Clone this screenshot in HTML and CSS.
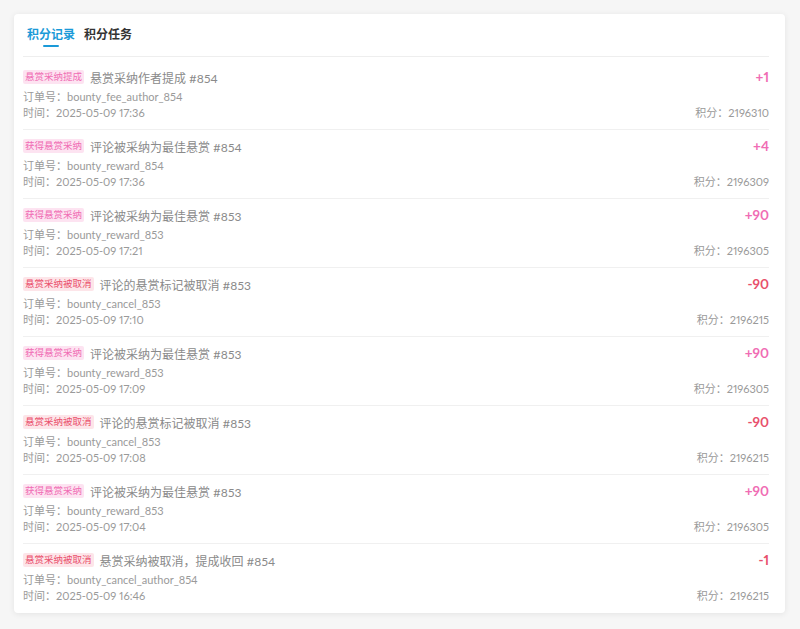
FILE: index.html
```html
<!DOCTYPE html>
<html lang="zh-CN">
<head>
<meta charset="utf-8">
<title>积分记录</title>
<link rel="stylesheet" href="styles.css">
</head>
<body>
<div class="page">
  <div class="card">
    <div class="tabs">
      <div class="tab active"><span class="tab-text">积分记录</span><span class="tab-bar"></span></div>
      <div class="tab"><span class="tab-text">积分任务</span><span class="tab-bar"></span></div>
    </div>
    <div class="list">
      <div class="row">
        <div class="line1"><div class="title"><span class="tag pink">悬赏采纳提成</span><span>悬赏采纳作者提成 #854</span></div><span class="val pink-text">+1</span></div>
        <div class="line2">订单号：bounty_fee_author_854</div>
        <div class="line3"><span>时间：2025-05-09 17:36</span><span>积分：2196310</span></div>
      </div>
      <div class="row">
        <div class="line1"><div class="title"><span class="tag pink">获得悬赏采纳</span><span>评论被采纳为最佳悬赏 #854</span></div><span class="val pink-text">+4</span></div>
        <div class="line2">订单号：bounty_reward_854</div>
        <div class="line3"><span>时间：2025-05-09 17:36</span><span>积分：2196309</span></div>
      </div>
      <div class="row">
        <div class="line1"><div class="title"><span class="tag pink">获得悬赏采纳</span><span>评论被采纳为最佳悬赏 #853</span></div><span class="val pink-text">+90</span></div>
        <div class="line2">订单号：bounty_reward_853</div>
        <div class="line3"><span>时间：2025-05-09 17:21</span><span>积分：2196305</span></div>
      </div>
      <div class="row">
        <div class="line1"><div class="title"><span class="tag red">悬赏采纳被取消</span><span>评论的悬赏标记被取消 #853</span></div><span class="val red-text">-90</span></div>
        <div class="line2">订单号：bounty_cancel_853</div>
        <div class="line3"><span>时间：2025-05-09 17:10</span><span>积分：2196215</span></div>
      </div>
      <div class="row">
        <div class="line1"><div class="title"><span class="tag pink">获得悬赏采纳</span><span>评论被采纳为最佳悬赏 #853</span></div><span class="val pink-text">+90</span></div>
        <div class="line2">订单号：bounty_reward_853</div>
        <div class="line3"><span>时间：2025-05-09 17:09</span><span>积分：2196305</span></div>
      </div>
      <div class="row">
        <div class="line1"><div class="title"><span class="tag red">悬赏采纳被取消</span><span>评论的悬赏标记被取消 #853</span></div><span class="val red-text">-90</span></div>
        <div class="line2">订单号：bounty_cancel_853</div>
        <div class="line3"><span>时间：2025-05-09 17:08</span><span>积分：2196215</span></div>
      </div>
      <div class="row">
        <div class="line1"><div class="title"><span class="tag pink">获得悬赏采纳</span><span>评论被采纳为最佳悬赏 #853</span></div><span class="val pink-text">+90</span></div>
        <div class="line2">订单号：bounty_reward_853</div>
        <div class="line3"><span>时间：2025-05-09 17:04</span><span>积分：2196305</span></div>
      </div>
      <div class="row last">
        <div class="line1"><div class="title"><span class="tag red">悬赏采纳被取消</span><span>悬赏采纳被取消，提成收回 #854</span></div><span class="val red-text">-1</span></div>
        <div class="line2">订单号：bounty_cancel_author_854</div>
        <div class="line3"><span>时间：2025-05-09 16:46</span><span>积分：2196215</span></div>
      </div>
    </div>
  </div>
</div>
</body>
</html>
```
FILE: styles.css
```css
* { box-sizing: border-box; }
html, body {
  margin: 0;
  padding: 0;
  background: #f6f6f6;
}
body {
  font-family: Lato, "Noto Sans CJK SC", sans-serif;
  font-variant-numeric: proportional-nums;
  color: #888;
}
.page {
  padding: 14px 15px 16px 14px;
}
.card {
  background: #fff;
  border-radius: 4px;
  box-shadow: 0 1px 6px rgba(0, 0, 0, 0.08);
  padding: 0 16px 1px 9px;
}
.tabs {
  display: flex;
  gap: 1px;
  padding-top: 13px;
  height: 43px;
  border-bottom: 1px solid #eeeeee;
}
.tab {
  display: flex;
  flex-direction: column;
  align-items: center;
  padding: 0 4px;
  gap: 2px;
}
.tab-text {
  font-size: 12px;
  line-height: 16px;
  font-weight: 700;
  color: #333;
}
.tab-bar {
  width: 16px;
  height: 2px;
  border-radius: 1px;
  background: transparent;
}
.tab.active .tab-text { color: #1b9ad8; }
.tab.active .tab-bar { background: #1b9ad8; }
.list {
  padding-top: 4px;
}
.row {
  padding: 7px 0 8px;
  border-bottom: 1px solid #f0f0f0;
}
.row.last { border-bottom: none; }
.line1 {
  display: flex;
  justify-content: space-between;
  align-items: center;
  height: 18px;
  margin-bottom: 3px;
}
.title {
  display: flex;
  align-items: center;
  gap: 6px;
  font-size: 12px;
  color: #8a8a8a;
}
.tag {
  font-size: 9.5px;
  line-height: 14px;
  padding: 0 2px;
  border-radius: 2px;
}
.tag.pink { background: #fde3f1; color: #f06cb4; }
.tag.red { background: #fde5e9; color: #ea4f6c; }
.val {
  font-size: 13.5px;
  font-weight: 700;
}
.pink-text { color: #f06cb4; }
.red-text { color: #e8506c; }
.line2, .line3 {
  font-size: 11px;
  line-height: 16px;
  color: #9a9a9a;
}
.line3 {
  display: flex;
  justify-content: space-between;
}
```
